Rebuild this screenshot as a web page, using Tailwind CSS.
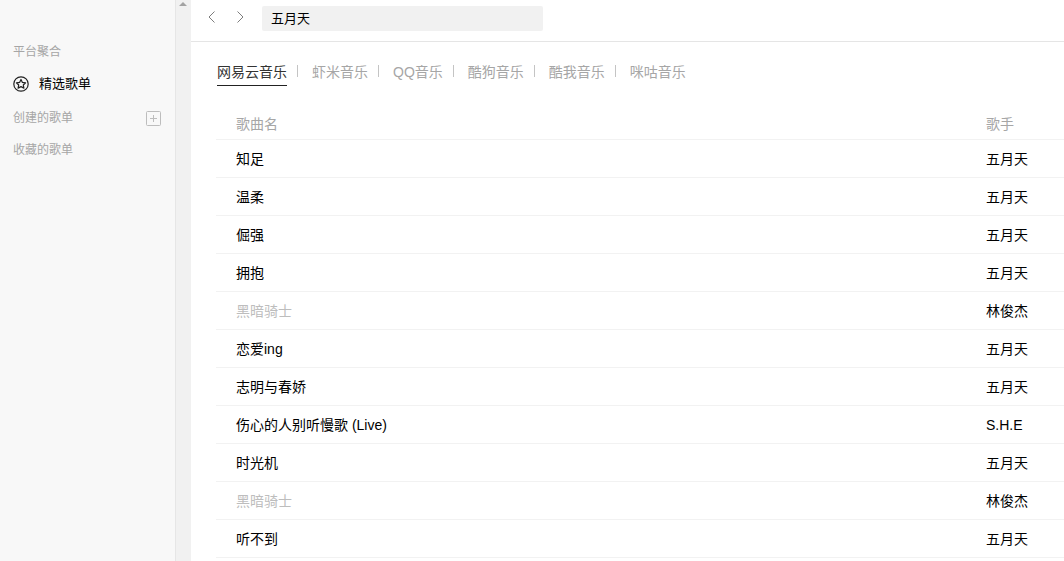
<!doctype html>
<html lang="zh">
<head>
<meta charset="utf-8">
<script src="https://cdn.jsdelivr.net/npm/@tailwindcss/browser@4"></script>
</head>
<body class="m-0 overflow-hidden bg-white">
<div class="flex h-[561px] w-[1064px] overflow-hidden font-['Liberation_Sans','Noto_Sans_CJK_SC',sans-serif] text-[14px] text-black">
  <aside class="h-full w-[175px] shrink-0 bg-[#f8f8f8] pl-[13px] pr-[14px] pt-[44px]">
    <div class="h-[16px] text-[12px] leading-[16px] text-[#a6a6a6]">平台聚合</div>
    <div class="mt-[12px] flex h-[24px] items-center gap-[10px]">
      <svg class="h-[16px] w-[16px]" viewBox="0 0 16 16" fill="none" stroke="#222" stroke-width="1.2"><circle cx="8" cy="8" r="7.2"/><path d="M8 3.500l1.400 2.900 3.200.4-2.300 2.200.6 3.100L8 10.600l-2.900 1.500.6-3.100L3.400 6.800l3.200-.4z" stroke-linejoin="round"/></svg>
      <span class="text-[13px] leading-[24px]">精选歌单</span>
    </div>
    <div class="mt-[14px] flex h-[16px] items-center justify-between text-[12px] leading-[16px] text-[#a6a6a6]">
      <span>创建的歌单</span>
      <svg class="h-[15px] w-[15px]" viewBox="0 0 15 15" fill="none" stroke="#bdbdbd"><rect x=".5" y=".5" width="14" height="14" rx="1"/><path d="M7.500 4v7M4 7.500h7"/></svg>
    </div>
    <div class="mt-[16px] h-[16px] text-[12px] leading-[16px] text-[#a6a6a6]">收藏的歌单</div>
  </aside>
  <div class="relative h-full w-[16px] shrink-0 border-l border-[#e6e6e6] bg-[#f1f1f1]">
    <div class="absolute left-[3px] top-[2px] h-0 w-0 border-x-[4px] border-b-[4px] border-x-transparent border-b-[#a3a3a3]"></div>
  </div>
  <main class="min-w-0 flex-1 bg-white">
    <header class="flex h-[42px] items-start border-b border-[#e5e5e5] pl-[16px]">
      <div class="flex h-[34px] items-center gap-[20px]">
        <svg class="h-[12px] w-[9px]" viewBox="0 0 9 12" fill="none" stroke="#7d7d7d"><path d="M7.500.5L2 6l5.500 5.500"/></svg>
        <svg class="h-[12px] w-[9px]" viewBox="0 0 9 12" fill="none" stroke="#7d7d7d"><path d="M1.500.5L7 6l-5.500 5.500"/></svg>
      </div>
      <div class="ml-[17px] mt-[6px] flex h-[25px] w-[281px] items-center rounded-[2px] bg-[#f1f1f1] pl-[9px] text-[13px] leading-[25px]">五月天</div>
    </header>
    <nav class="ml-[26px] mt-[21px] flex h-[23px] text-[#a6a6a6]">
      <div class="h-[23px] border-b border-[#222] text-[#333] leading-[19px]">网易云音乐</div>
      <div class="ml-[10px] mt-[2px] h-[12px] w-px bg-[#c4c4c4]"></div>
      <div class="ml-[14px] leading-[19px]">虾米音乐</div>
      <div class="ml-[10px] mt-[2px] h-[12px] w-px bg-[#c4c4c4]"></div>
      <div class="ml-[14px] leading-[19px]">QQ音乐</div>
      <div class="ml-[10px] mt-[2px] h-[12px] w-px bg-[#c4c4c4]"></div>
      <div class="ml-[14px] leading-[19px]">酷狗音乐</div>
      <div class="ml-[10px] mt-[2px] h-[12px] w-px bg-[#c4c4c4]"></div>
      <div class="ml-[14px] leading-[19px]">酷我音乐</div>
      <div class="ml-[10px] mt-[2px] h-[12px] w-px bg-[#c4c4c4]"></div>
      <div class="ml-[14px] leading-[19px]">咪咕音乐</div>
    </nav>
    <section class="ml-[25px] mt-[20px]">
      <div class="flex h-[34px] items-center border-b border-[#f2f2f2] pl-[20px] pt-[4px] text-[#a6a6a6]"><span class="w-[750px]">歌曲名</span><span>歌手</span></div>
      <div class="flex h-[38px] items-center border-b border-[#f2f2f2] pl-[20px] pt-[2px]"><span class="w-[750px]">知足</span><span>五月天</span></div>
      <div class="flex h-[38px] items-center border-b border-[#f2f2f2] pl-[20px] pt-[2px]"><span class="w-[750px]">温柔</span><span>五月天</span></div>
      <div class="flex h-[38px] items-center border-b border-[#f2f2f2] pl-[20px] pt-[2px]"><span class="w-[750px]">倔强</span><span>五月天</span></div>
      <div class="flex h-[38px] items-center border-b border-[#f2f2f2] pl-[20px] pt-[2px]"><span class="w-[750px]">拥抱</span><span>五月天</span></div>
      <div class="flex h-[38px] items-center border-b border-[#f2f2f2] pl-[20px] pt-[2px]"><span class="w-[750px] text-[#bdbdbd]">黑暗骑士</span><span>林俊杰</span></div>
      <div class="flex h-[38px] items-center border-b border-[#f2f2f2] pl-[20px] pt-[2px]"><span class="w-[750px]">恋爱ing</span><span>五月天</span></div>
      <div class="flex h-[38px] items-center border-b border-[#f2f2f2] pl-[20px] pt-[2px]"><span class="w-[750px]">志明与春娇</span><span>五月天</span></div>
      <div class="flex h-[38px] items-center border-b border-[#f2f2f2] pl-[20px] pt-[2px]"><span class="w-[750px]">伤心的人别听慢歌 (Live)</span><span>S.H.E</span></div>
      <div class="flex h-[38px] items-center border-b border-[#f2f2f2] pl-[20px] pt-[2px]"><span class="w-[750px]">时光机</span><span>五月天</span></div>
      <div class="flex h-[38px] items-center border-b border-[#f2f2f2] pl-[20px] pt-[2px]"><span class="w-[750px] text-[#bdbdbd]">黑暗骑士</span><span>林俊杰</span></div>
      <div class="flex h-[38px] items-center border-b border-[#f2f2f2] pl-[20px] pt-[2px]"><span class="w-[750px]">听不到</span><span>五月天</span></div>
    </section>
  </main>
</div>
</body>
</html>
